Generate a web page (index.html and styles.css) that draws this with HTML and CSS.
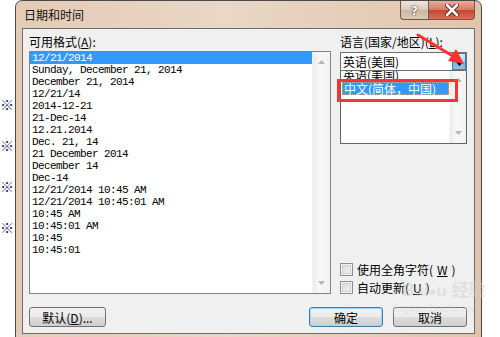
FILE: index.html
```html
<!DOCTYPE html>
<html lang="zh-CN">
<head>
    <meta charset="UTF-8">
    <title>日期和时间</title>
    <link rel="stylesheet" href="styles.css">
</head>
<body>
    <div class="desk">
        <!-- resti della pagina dietro la finestra -->
        <div class="bg-marks">
            <span>※</span>
            <span>※</span>
            <span>※</span>
            <span>※</span>
        </div>

        <div class="window">
            <div class="titlebar">
                <span class="title">日期和时间</span>
                <div class="caption-btns">
                    <div class="cap-btn help">?</div>
                    <div class="cap-btn close">
                        <svg width="14" height="12" viewBox="0 0 14 12">
                            <path d="M2 1 L12 11 M12 1 L2 11" stroke="#5a2418" stroke-width="4.5" stroke-linecap="round"/>
                            <path d="M2 1 L12 11 M12 1 L2 11" stroke="#ffffff" stroke-width="2.5" stroke-linecap="round"/>
                        </svg>
                    </div>
                </div>
            </div>

            <div class="client">
                <div class="main">
                    <div class="col-left">
                        <div class="label">可用格式(<u>A</u>):</div>
                        <div class="listbox">
                            <ul class="items">
                                <li class="sel">12/21/2014</li>
                                <li>Sunday, December 21, 2014</li>
                                <li>December 21, 2014</li>
                                <li>12/21/14</li>
                                <li>2014-12-21</li>
                                <li>21-Dec-14</li>
                                <li>12.21.2014</li>
                                <li>Dec. 21, 14</li>
                                <li>21 December 2014</li>
                                <li>December 14</li>
                                <li>Dec-14</li>
                                <li>12/21/2014 10:45 AM</li>
                                <li>12/21/2014 10:45:01 AM</li>
                                <li>10:45 AM</li>
                                <li>10:45:01 AM</li>
                                <li>10:45</li>
                                <li>10:45:01</li>
                            </ul>
                            <div class="vscroll">
                                <svg width="7" height="4" viewBox="0 0 7 4"><path d="M0 4 L3.5 0 L7 4 Z" fill="#b5b5b5"/></svg>
                                <svg width="7" height="4" viewBox="0 0 7 4"><path d="M0 0 L7 0 L3.5 4 Z" fill="#b5b5b5"/></svg>
                            </div>
                        </div>
                    </div>

                    <div class="col-right">
                        <div class="label">语言(国家/地区)(<u>L</u>):</div>
                        <div class="combo">
                            <span class="combo-text">英语(美国)</span>
                            <span class="combo-btn">
                                <svg width="7" height="4" viewBox="0 0 7 4"><path d="M0 0 L7 0 L3.5 4 Z" fill="#000"/></svg>
                            </span>
                        </div>
                        <div class="droplist">
                            <div class="drop-items">
                                <div class="drop-item cut">英语(美国)</div>
                                <div class="drop-item sel">中文(简体，中国)</div>
                            </div>
                            <div class="vscroll small">
                                <svg width="7" height="4" viewBox="0 0 7 4"><path d="M0 4 L3.5 0 L7 4 Z" fill="#b5b5b5"/></svg>
                                <svg width="7" height="4" viewBox="0 0 7 4"><path d="M0 0 L7 0 L3.5 4 Z" fill="#b5b5b5"/></svg>
                            </div>
                        </div>

                        <div class="checks">
                            <div class="check"><span class="box"></span>使用全角字符(<u>W</u>)</div>
                            <div class="check"><span class="box"></span>自动更新(<u>U</u>)</div>
                        </div>
                    </div>
                </div>

                <div class="footer">
                    <button type="button" class="btn wide">默认(<u>D</u>)...</button>
                    <span class="spacer"></span>
                    <button type="button" class="btn focused">确定</button>
                    <button type="button" class="btn">取消</button>
                </div>
            </div>
        </div>
    </div>

    <!-- annotazioni sopra lo screenshot -->
    <div class="red-box"></div>
    <svg class="red-arrow" width="60" height="40" viewBox="0 0 60 40">
        <path d="M2 3 L40 26" stroke="#ff3131" stroke-width="3" stroke-linecap="round"/>
        <path d="M48 32 L32 29 L40 17 Z" fill="#ff3131"/>
    </svg>
    <div class="watermark">
        <span class="wm-big">Bai<span class="paw">●</span>u 经验</span>
        <span class="wm-small">jingyan.baidu.com</span>
    </div>
</body>
</html>
```

FILE: styles.css
```css
/* Base */
body {
    margin: 0;
    width: 500px;
    height: 337px;
    overflow: hidden;
    background: #ffffff;
    position: relative;
    font-family: "Noto Sans CJK SC", "Liberation Sans", sans-serif;
    font-size: 12px;
    color: #000;
}

u {
    text-decoration: underline;
}

.desk {
    display: flex;
    height: 337px;
}

/* Caratteri della pagina dietro */
.bg-marks {
    width: 15px;
    flex: none;
    overflow: hidden;
    padding-top: 84px;
    line-height: 41px;
    font-size: 14px;
    color: #1d2c5a;
}

.bg-marks span {
    display: block;
}

/* Finestra */
.window {
    width: 467px;
    height: 350px;
    flex: none;
    box-sizing: border-box;
    border: 1px solid #4a4a4a;
    border-radius: 7px 7px 0 0;
    background: linear-gradient(90deg, #e4cbb5 0%, #ead7c6 45%, #e1c4ab 100%);
}

.titlebar {
    height: 27px;
    display: flex;
    justify-content: space-between;
    align-items: flex-start;
    padding: 0 6px 0 8px;
}

.title {
    line-height: 28px;
    color: #111;
}

.caption-btns {
    display: flex;
}

.cap-btn {
    height: 19px;
    box-sizing: border-box;
    display: flex;
    align-items: center;
    justify-content: center;
    border: 1px solid #6f5a48;
    border-top: none;
}

.help {
    width: 28px;
    border-radius: 0 0 0 4px;
    border-right: none;
    background: linear-gradient(#efe4da 0%, #dccbbb 50%, #cdb6a1 51%, #dcc8b5 100%);
    color: #fff;
    font-family: "DejaVu Sans", sans-serif;
    font-weight: bold;
    font-size: 13px;
    text-shadow: 0 0 1px #4a3a2c, 0 0 1px #4a3a2c, 0 0 1px #4a3a2c;
}

.close {
    width: 47px;
    border-radius: 0 0 4px 0;
    background: linear-gradient(#eaab9c 0%, #d97a64 50%, #c4472f 51%, #d3705a 100%);
}

/* Area client */
.client {
    margin: 0 6px;
    height: 306px;
    box-sizing: border-box;
    border: 1px solid #6d6d6d;
    background: #f0f0f0;
    padding: 0 7px 0 6px;
}

.main {
    display: flex;
    gap: 9px;
    height: 265px;
}

.col-left {
    width: 302px;
    display: flex;
    flex-direction: column;
}

.label {
    height: 22px;
    box-sizing: border-box;
    padding-top: 3px;
    line-height: 19px;
    white-space: nowrap;
}

.listbox {
    flex: 1;
    display: flex;
    border: 1px solid #828282;
    background: #fff;
}

.items {
    flex: 1;
    list-style: none;
    margin: 0;
    padding: 0;
    font-family: "Liberation Mono", monospace;
    font-size: 11px;
    letter-spacing: -0.6px;
    line-height: 12px;
}

.items li {
    height: 12px;
    padding-left: 2px;
    white-space: nowrap;
}

.items li.sel {
    background: #3399ff;
    color: #fff;
}

/* Barra di scorrimento disabilitata */
.vscroll {
    width: 17px;
    flex: none;
    display: flex;
    flex-direction: column;
    justify-content: space-between;
    align-items: center;
    padding: 8px 0;
    background: linear-gradient(90deg, #ececec, #f8f8f8 40%, #f2f2f2);
    border-left: 1px solid #f4f4f4;
}

.vscroll.small {
    width: 16px;
    padding: 7px 0 8px;
}

.col-right {
    width: 127px;
    display: flex;
    flex-direction: column;
}

.combo {
    margin-top: 1px;
    height: 19px;
    box-sizing: border-box;
    display: flex;
    border: 1px solid #6f6f6f;
    background: #fff;
}

.combo-text {
    flex: 1;
    padding-left: 2px;
    line-height: 17px;
    white-space: nowrap;
}

.combo-btn {
    width: 14px;
    box-sizing: border-box;
    display: flex;
    align-items: center;
    justify-content: center;
    border: 1px solid #3c7fb1;
    background: linear-gradient(#d3ebfa 0%, #a9d3ef 50%, #6fb1de 51%, #8cc4e8 100%);
}

.combo-btn svg {
    margin-top: 4px;
}

.droplist {
    height: 73px;
    box-sizing: border-box;
    display: flex;
    border: 1px solid #646464;
    border-top: none;
    background: #fff;
}

.drop-items {
    flex: 1;
    overflow: hidden;
}

.drop-item {
    height: 12px;
    padding-left: 2px;
    line-height: 12px;
    white-space: nowrap;
}

.drop-item.cut {
    height: 11px;
    line-height: 8px;
    overflow: hidden;
}

.drop-item.sel {
    height: 13px;
    box-sizing: border-box;
    margin-left: 1px;
    padding-left: 1px;
    line-height: 11px;
    background: #3399ff;
    color: #fff;
    border: 1px dotted #f3a247;
}

.checks {
    margin-top: auto;
    display: flex;
    flex-direction: column;
    gap: 5px;
}

.check {
    height: 13px;
    display: flex;
    align-items: center;
    gap: 4px;
    white-space: nowrap;
    line-height: 13px;
}

.box {
    width: 13px;
    height: 13px;
    box-sizing: border-box;
    flex: none;
    border: 1px solid #8e8f8f;
    background: linear-gradient(135deg, #d6d6d6, #f7f7f7);
    box-shadow: inset 0 0 0 1px #f4f4f4, inset 0 0 0 2px #cfcfcf;
}

/* Pulsanti */
.footer {
    display: flex;
    padding-top: 13px;
}

.spacer {
    flex: 1;
}

.btn {
    width: 74px;
    height: 20px;
    padding: 0;
    margin: 0 0 0 10px;
    box-sizing: border-box;
    border: 1px solid #707070;
    border-radius: 3px;
    background: linear-gradient(#f2f2f2 0%, #ebebeb 50%, #dddddd 51%, #cfcfcf 100%);
    font-family: "Noto Sans CJK SC", sans-serif;
    font-size: 12px;
    line-height: 17px;
    color: #000;
}

.btn.wide {
    width: 77px;
    margin-left: 0;
}

.btn.focused {
    border-color: #3c7fb1;
    box-shadow: inset 0 0 0 1px #9fd5f5;
}

/* Annotazioni rosse */
.red-box {
    position: absolute;
    left: 337px;
    top: 79px;
    width: 121px;
    height: 23px;
    box-sizing: border-box;
    border: 3px solid #ff3333;
}

.red-arrow {
    position: absolute;
    left: 416px;
    top: 32px;
}

/* Filigrana */
.watermark {
    position: absolute;
    left: 392px;
    top: 282px;
    display: flex;
    flex-direction: column;
    color: rgba(205, 205, 205, 0.45);
    font-family: "Liberation Sans", "Noto Sans CJK SC", sans-serif;
    pointer-events: none;
}

.wm-big {
    font-size: 17px;
    font-weight: bold;
    line-height: 18px;
    padding-left: 10px;
}

.paw {
    font-size: 13px;
}

.wm-small {
    font-size: 11px;
    line-height: 14px;
}
```
